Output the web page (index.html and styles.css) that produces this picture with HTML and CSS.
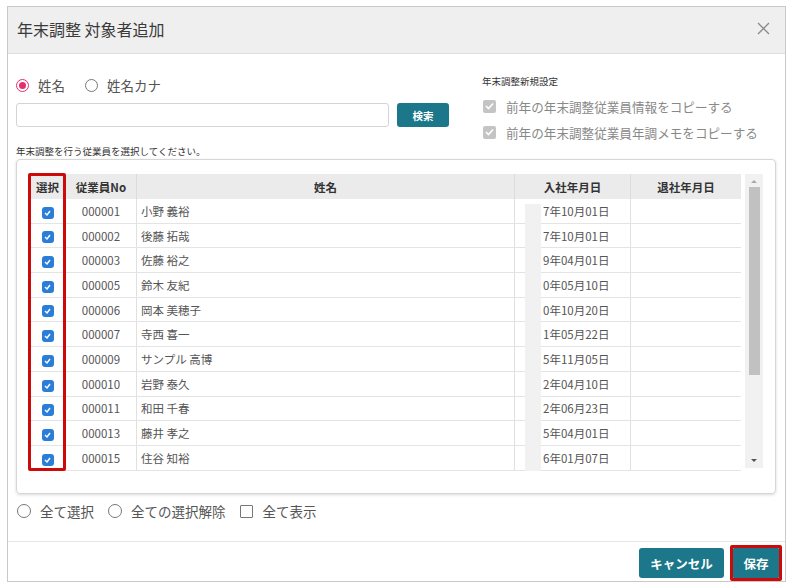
FILE: index.html
```html
<!DOCTYPE html>
<html lang="ja">
<head>
    <meta charset="UTF-8">
    <title>年末調整 対象者追加</title>
    <link rel="stylesheet" href="styles.css">
</head>
<body>
    <div class="dialog">
        <header class="dialog-header">
            <h1>年末調整 対象者追加</h1>
            <svg class="close" width="13" height="13" viewBox="0 0 13 13"><path d="M1 1L12 12M12 1L1 12" stroke="#8a8a8a" stroke-width="1.3" fill="none"/></svg>
        </header>

        <div class="dialog-body">
            <div class="top">
                <div class="search">
                    <div class="radios">
                        <label class="radio"><span class="dot on"></span>姓名</label>
                        <label class="radio"><span class="dot"></span>姓名カナ</label>
                    </div>
                    <div class="search-row">
                        <input type="text" class="search-input">
                        <button class="btn btn-small">検索</button>
                    </div>
                </div>
                <div class="settings">
                    <div class="settings-title">年末調整新規設定</div>
                    <label class="copy"><span class="box-gray"><svg width="9" height="8" viewBox="0 0 9 8"><path d="M1 4L3.5 6.5L8 1.5" stroke="#fff" stroke-width="1.6" fill="none"/></svg></span>前年の年末調整従業員情報をコピーする</label>
                    <label class="copy"><span class="box-gray"><svg width="9" height="8" viewBox="0 0 9 8"><path d="M1 4L3.5 6.5L8 1.5" stroke="#fff" stroke-width="1.6" fill="none"/></svg></span>前年の年末調整従業員年調メモをコピーする</label>
                </div>
            </div>

            <p class="hint">年末調整を行う従業員を選択してください。</p>

            <div class="panel">
                <div class="table-wrap">
                    <table class="list">
                        <thead>
                            <tr><th>選択</th><th>従業員No</th><th>姓名</th><th>入社年月日</th><th>退社年月日</th></tr>
                        </thead>
                        <tbody id="rows"></tbody>
                    </table>
                    <div class="strip"></div>
                    <div class="mark"></div>
                </div>
                <div class="scrollbar">
                    <span class="arrow up"></span>
                    <span class="thumb"></span>
                    <span class="arrow down"></span>
                </div>
            </div>

            <div class="options">
                <label class="radio"><span class="dot"></span>全て選択</label>
                <label class="radio"><span class="dot"></span>全ての選択解除</label>
                <label class="radio"><span class="square"></span>全て表示</label>
            </div>
        </div>

        <footer class="dialog-footer">
            <button class="btn btn-big">キャンセル</button>
            <span class="save-mark"><button class="btn btn-save">保存</button></span>
        </footer>
    </div>

    <script>
        const employees = [
            ['000001', '小野 義裕', '7年10月01日'],
            ['000002', '後藤 拓哉', '7年10月01日'],
            ['000003', '佐藤 裕之', '9年04月01日'],
            ['000005', '鈴木 友紀', '0年05月10日'],
            ['000006', '岡本 美穂子', '0年10月20日'],
            ['000007', '寺西 喜一', '1年05月22日'],
            ['000009', 'サンプル 高博', '5年11月05日'],
            ['000010', '岩野 泰久', '2年04月10日'],
            ['000011', '和田 千春', '2年06月23日'],
            ['000013', '藤井 孝之', '5年04月01日'],
            ['000015', '住谷 知裕', '6年01月07日']
        ];

        const check = '<span class="box-blue"><svg width="7" height="6" viewBox="0 0 7 6"><path d="M1 3L3 5L6 1" stroke="#fff" stroke-width="1.4" fill="none"/></svg></span>';

        // Build the employee rows
        document.getElementById('rows').innerHTML = employees.map(e =>
            `<tr><td class="c-sel">${check}</td><td class="c-no">${e[0]}</td><td class="c-name">${e[1]}</td><td class="c-date">${e[2]}</td><td></td></tr>`
        ).join('');
    </script>
</body>
</html>
```

FILE: styles.css
```css
body {
    margin: 0;
    font-family: "Noto Sans CJK JP", "Noto Sans", sans-serif;
    color: #444;
    background: #fff;
}
.dialog {
    margin: 6px 0 0 7px;
    width: 779px;
    height: 576px;
    box-sizing: border-box;
    border: 1px solid #c9c9c9;
    display: flex;
    flex-direction: column;
}
.dialog-header {
    height: 46px;
    background: #efefef;
    border-bottom: 1px solid #dedede;
    display: flex;
    align-items: center;
    justify-content: space-between;
    padding: 0 15px 0 9px;
}
.dialog-header h1 {
    margin: 0;
    font-size: 16px;
    font-weight: normal;
    color: #3a3a3a;
    margin-top: -3px;
}
.close {
    margin-top: -4px;
}
.dialog-body {
    flex: 1;
    padding: 0 8px;
}
.top {
    display: flex;
}
.search {
    width: 433px;
    padding-top: 22px;
}
.radios {
    display: flex;
    gap: 20px;
    height: 18px;
}
.radio {
    display: flex;
    align-items: center;
    font-size: 13.5px;
    color: #555;
    line-height: 18px;
}
.dot {
    width: 11px;
    height: 11px;
    border: 1.5px solid #777;
    border-radius: 50%;
    margin-right: 9px;
    position: relative;
}
.dot.on {
    border-color: #e2306c;
}
.dot.on::after {
    content: "";
    position: absolute;
    left: 2px;
    top: 2px;
    width: 7px;
    height: 7px;
    border-radius: 50%;
    background: #e2306c;
}
.square {
    width: 11px;
    height: 11px;
    border: 1.5px solid #777;
    border-radius: 1px;
    margin-right: 10px;
}
.search-row {
    display: flex;
    gap: 8px;
    margin-top: 9px;
}
.search-input {
    width: 373px;
    height: 24px;
    box-sizing: border-box;
    border: 1px solid #d4d4d4;
    border-radius: 3px;
    margin: 0;
}
.btn {
    background: #1b7789;
    color: #fff;
    border: none;
    border-radius: 3px;
    font-family: inherit;
    font-weight: bold;
    padding: 0;
}
.btn-small {
    width: 52px;
    height: 24px;
    font-size: 10.5px;
}
.settings {
    margin-left: 33px;
    padding-top: 20px;
}
.settings-title {
    font-size: 9.5px;
    line-height: 14px;
    color: #333;
    margin-bottom: 5px;
}
.copy {
    display: flex;
    align-items: center;
    height: 26px;
    font-size: 12.6px;
    color: #888;
    margin-left: 1px;
}
.box-gray {
    width: 13px;
    height: 13px;
    background: #c4c4c4;
    border-radius: 2px;
    display: flex;
    align-items: center;
    justify-content: center;
    margin-right: 10px;
}
.hint {
    margin: 0;
    font-size: 9.5px;
    line-height: 12px;
    color: #333;
}
.panel {
    margin-top: 2px;
    width: 760px;
    height: 335px;
    box-sizing: border-box;
    border: 1px solid #d6d6d6;
    border-radius: 4px;
    box-shadow: 0 1px 3px rgba(0, 0, 0, 0.15);
    padding: 14px 12px 0 13px;
    display: flex;
    align-items: flex-start;
}
.table-wrap {
    position: relative;
    width: 711px;
}
.list {
    width: 711px;
    border-collapse: collapse;
    table-layout: fixed;
    font-size: 11.5px;
}
.list th {
    height: 25px;
    background: #ebebeb;
    color: #333;
    font-weight: bold;
    border-right: 1px solid #dcdcdc;
    padding: 0;
}
.list th:nth-child(1) { width: 35px; }
.list th:nth-child(2) { width: 70px; }
.list th:nth-child(3) { width: 377px; }
.list th:nth-child(4) { width: 115px; }
.list th:last-child { border-right: none; }
.list td {
    height: 23.7px;
    padding: 0;
    border-bottom: 1px solid #e4e4e4;
    border-right: 1px solid #e0e0e0;
    color: #555;
}
.list td:last-child {
    border-right: none;
}
.c-sel {
    text-align: center;
}
.c-no {
    text-align: center;
}
.c-name {
    padding-left: 4px !important;
}
.c-date {
    padding-left: 28px !important;
}
.box-blue {
    display: inline-flex;
    align-items: center;
    justify-content: center;
    width: 12px;
    height: 12px;
    background: #2b7ed8;
    border-radius: 3px;
    vertical-align: middle;
}
.strip {
    position: absolute;
    left: 495px;
    top: 30px;
    width: 16px;
    height: 267px;
    background: #f1f1f1;
}
.mark {
    position: absolute;
    left: -2px;
    top: -1px;
    width: 38px;
    height: 298px;
    box-sizing: border-box;
    border: 3px solid #cc0a0a;
    border-radius: 2px;
}
.scrollbar {
    margin-left: 4px;
    width: 18px;
    height: 294px;
    background: #f1f1f1;
    display: flex;
    flex-direction: column;
    align-items: center;
}
.arrow {
    width: 0;
    height: 0;
    border-left: 3px solid transparent;
    border-right: 3px solid transparent;
}
.arrow.up {
    border-bottom: 3px solid #aaa;
    margin-top: 6px;
}
.arrow.down {
    border-top: 3px solid #555;
    margin-top: auto;
    margin-bottom: 6px;
}
.thumb {
    width: 11px;
    height: 188px;
    background: #c1c1c1;
    margin-top: 4px;
}
.options {
    display: flex;
    align-items: center;
    gap: 14px;
    height: 20px;
    margin-top: 7px;
    padding-left: 1px;
}
.options .radio {
    font-size: 13.5px;
}
.options .dot {
    width: 12px;
    height: 12px;
    margin-right: 9px;
}
.dialog-footer {
    border-top: 1px solid #e6e6e6;
    padding: 3px 3px 0 0;
    display: flex;
    justify-content: flex-end;
    align-items: center;
    gap: 6px;
}
.btn-big {
    width: 85px;
    height: 30px;
    font-size: 12.5px;
}
.save-mark {
    display: flex;
    border: 3px solid #cc0a0a;
    border-radius: 2px;
}
.btn-save {
    width: 46px;
    height: 30px;
    font-size: 12.5px;
    border-radius: 1px;
}
```
